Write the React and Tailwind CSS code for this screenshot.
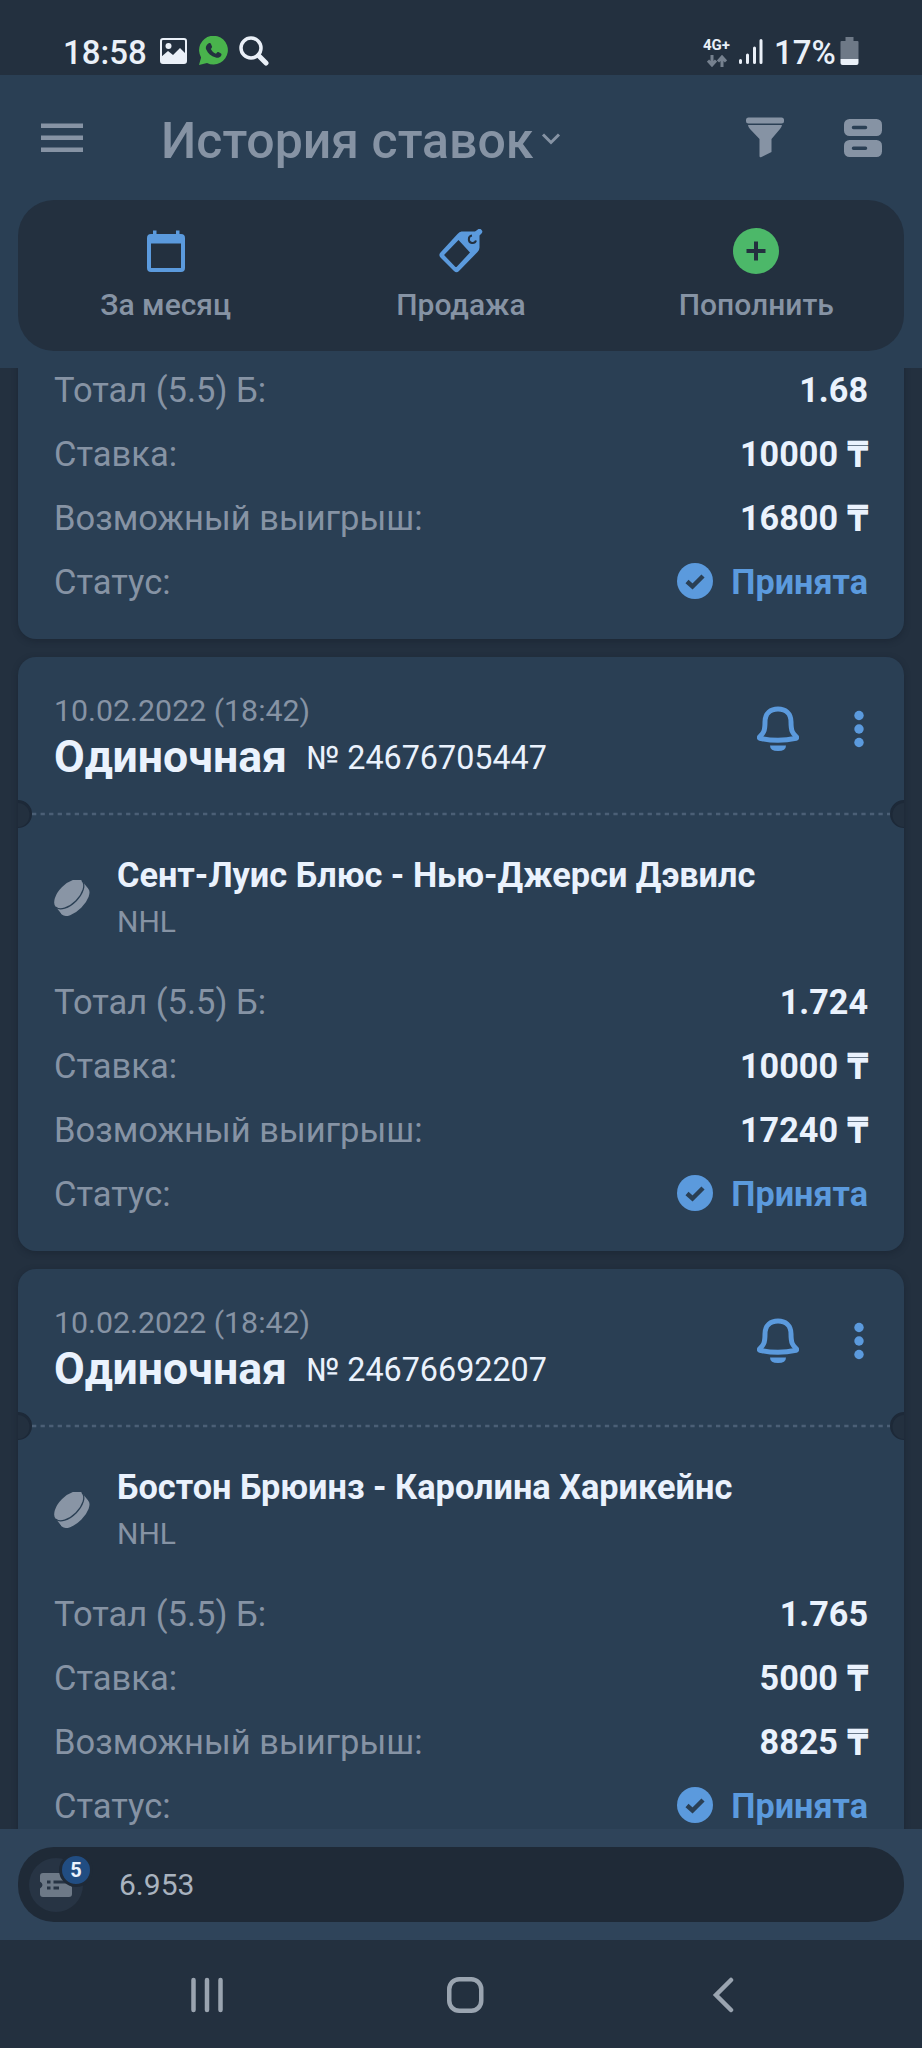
import { Fragment } from "react"

const bets = [
  {
    id: 1,
    rows: [["Тотал (5.5) Б:", "1.68"], ["Ставка:", "10000", "₸"], ["Возможный выигрыш:", "16800", "₸"]],
  },
  {
    id: 2,
    date: "10.02.2022 (18:42)",
    number: "№ 24676705447",
    teams: "Сент-Луис Блюс - Нью-Джерси Дэвилс",
    rows: [["Тотал (5.5) Б:", "1.724"], ["Ставка:", "10000", "₸"], ["Возможный выигрыш:", "17240", "₸"]],
  },
  {
    id: 3,
    date: "10.02.2022 (18:42)",
    number: "№ 24676692207",
    teams: "Бостон Брюинз - Каролина Харикейнс",
    rows: [["Тотал (5.5) Б:", "1.765"], ["Ставка:", "5000", "₸"], ["Возможный выигрыш:", "8825", "₸"]],
  },
]

export default function App(){
  return(
    <div className="flex h-[2048px] w-[922px] flex-col overflow-hidden bg-[#23303f] font-['Roboto',sans-serif] leading-none whitespace-nowrap text-[#8693a4]">
      <StatusBar />
      <header className="h-[293px] shrink-0 bg-[#2a3f54]">
        <div className="flex h-[125px] items-center pr-10 pl-[41px]">
          <MenuIcon />
          <h1 className="mt-[7px] ml-[78px] text-[50px] font-medium">История ставок</h1>
          <svg className="mt-0.5 ml-2" width="20" height="14" viewBox="0 0 20 14" fill="none" stroke="currentColor" strokeWidth="3">
            <path d="M2 2.5 10 10.5 18 2.5" />
          </svg>
          <div className="ml-auto flex items-center gap-[60px]">
            <FilterIcon />
            <ViewIcon />
          </div>
        </div>
        <nav className="mx-[18px] grid h-[151px] grid-cols-3 rounded-[36px] bg-[#23303f]">
          <Tab label="За месяц"><CalendarIcon /></Tab>
          <Tab label="Продажа"><TagIcon /></Tab>
          <Tab label="Пополнить"><PlusIcon /></Tab>
        </nav>
      </header>

      <main className="flex min-h-0 flex-1 flex-col gap-[18px] overflow-hidden px-[18px]">
        {bets.map((bet) => (
          <BetCard key={bet.id} bet={bet} />
        ))}
      </main>

      <Coupon />
      <SystemNav />
    </div>
  )
}

function StatusBar(){
  return(
    <div className="flex h-[75px] shrink-0 items-start justify-between pt-9 pr-[63px] pl-[63px] text-[#eaf0f8]">
      <div className="flex items-start">
        <span className="w-[83px] text-[33px] font-medium">18:58</span>
        <svg className="mt-0.5 ml-3.5" width="27" height="26" viewBox="0 0 27 26">
          <rect x="1" y="1" width="25" height="24" rx="2" fill="none" stroke="currentColor" strokeWidth="2" />
          <circle cx="8.5" cy="8" r="3" fill="currentColor" />
          <path d="M1 19 8 13 13 17 20 10 26 16V25H1Z" fill="currentColor" />
        </svg>
        <svg className="ml-3" width="29" height="29" viewBox="0 0 29 29">
          <path d="M0 29 2.1 21.5A14.4 14.4 0 1 1 8 27Z" fill="#49b34c" />
          <path d="M9.4 7.5c1.3-1 2.2-.4 2.7.8l.9 2.1c.3.7-.2 1.3-1.2 2.5 1.2 2.3 2.9 3.9 5.2 4.8 1.2-1.5 1.6-2 2.4-1.6l2.6 1.3c.8.4.6 1.5 0 2.6-1 1.5-3.2 2.2-5.2 1.6-5-1.5-7.8-4.2-9.6-8.1-1-2.3.6-5 2.2-6Z" fill="#23303f" />
        </svg>
        <svg className="ml-[11px]" width="30" height="30" viewBox="0 0 30 30" fill="none" stroke="currentColor">
          <circle cx="12" cy="12" r="10" strokeWidth="3.5" />
          <path d="M19.5 19.5 27 27" strokeWidth="5" strokeLinecap="round" />
        </svg>
      </div>
      <div className="flex items-start">
        <div className="flex w-[27px] flex-col items-center pt-0.5">
          <span className="text-[15px] font-bold">4G+</span>
          <svg className="mt-0.5" width="20" height="12" viewBox="0 0 20 12" fill="none" stroke="#76818f" strokeWidth="3">
            <path d="M5 0V10M1 5.5 5 10 9 5.5M15 12V2M11 6.5 15 2 19 6.5" />
          </svg>
        </div>
        <svg className="mt-[3px] ml-[9px]" width="24" height="26" viewBox="0 0 24 26" stroke="currentColor" strokeWidth="3" strokeLinecap="round">
          <path d="M1.5 21.5V23.5M8.5 16V23.5M15.5 9V23.5M22 1.5V23.5" />
        </svg>
        <span className="ml-[11px] w-[62px] text-[33px] font-medium">17%</span>
        <svg className="mt-px ml-1" width="19" height="28" viewBox="0 0 19 28">
          <path d="M5.5 0H13.5V4H17.5Q18.5 4 18.5 5V22H.5V5Q.5 4 1.5 4H5.5Z" fill="#6e7987" />
          <path d="M.5 22H18.5V26Q18.5 28 16.5 28H2.5Q.5 28 .5 26Z" fill="currentColor" />
        </svg>
      </div>
    </div>
  )
}

function Tab({ label, children }){
  return(
    <div className="flex flex-col items-center">
      <div className="mt-[26px] flex h-[50px] items-center">{children}</div>
      <p className="mt-3.5 text-[30px] font-medium">{label}</p>
    </div>
  )
}

function BetCard({ bet }){
  const { date, number, teams, rows } = bet
  return(
    <section
      className={`shrink-0 bg-[#2a3f54] px-9 pb-[25px] shadow-[0_2px_6px_rgba(16,26,38,0.35)] ${date ? "rounded-[18px]" : "-mt-2.5 rounded-b-[18px]"}`}
    >
      {date && (
        <Fragment>
          <div className="flex h-[156px] items-start justify-between">
            <div className="pt-[39px]">
              <p className="text-[30.3px]">{date}</p>
              <div className="mt-[9px] flex items-center gap-[19px]">
                <h2 className="text-[44.6px] font-bold text-[#eaf2fd]">Одиночная</h2>
                <span className="pt-0.5 text-[32.3px] text-[#eaf2fd]">{number}</span>
              </div>
            </div>
            <div className="flex items-center gap-[55px] pt-[49px] pr-1 text-[#5b9add]">
              <BellIcon />
              <svg width="10" height="38" viewBox="0 0 10 38" fill="currentColor">
                <circle cx="5" cy="5.5" r="4.7" />
                <circle cx="5" cy="19" r="4.7" />
                <circle cx="5" cy="32.5" r="4.7" />
              </svg>
            </div>
          </div>
          <Perforation />
          <div className="flex h-[155px] items-start">
            <PuckIcon />
            <div className="ml-[26px] pt-[43px]">
              <p className="text-[34.3px] font-bold text-[#eaf2fd]">{teams}</p>
              <p className="mt-[15px] text-[30px]">NHL</p>
            </div>
          </div>
        </Fragment>
      )}
      {rows.map(([name, value, currency]) => (
        <div key={name} className="flex h-16 items-center justify-between text-[34.5px]">
          <span>{name}</span>
          <span className="text-[34.2px] font-bold text-[#eaf2fd]">
            {value}
            {currency && <span className="ml-[11px] inline-block origin-right scale-x-105 [-webkit-text-stroke:0.8px]">{currency}</span>}
          </span>
        </div>
      ))}
      <div className="flex h-16 items-center text-[34.5px]">
        <span>Статус:</span>
        <CheckIcon />
        <span className="ml-[18px] text-[34.2px] font-bold text-[#5b9add]">Принята</span>
      </div>
    </section>
  )
}

// dashed tear line with a half-circle notch on both edges
function Perforation(){
  return(
    <div className="-mx-9 h-0.5">
      <svg className="relative -top-3.5 block" width="886" height="30" viewBox="0 0 886 30">
        <path d="M14 15H874" stroke="#4b5f76" strokeWidth="2.5" strokeDasharray="4.3 4.25" />
        <path d="M0 1A14 14 0 0 1 0 29ZM886 1A14 14 0 0 0 886 29Z" fill="#1d2938" />
        <path d="M0 4A11 11.5 0 0 1 0 28ZM886 4A11 11.5 0 0 0 886 28Z" fill="#23303f" />
      </svg>
    </div>
  )
}

function Coupon(){
  return(
    <div className="h-[111px] shrink-0 bg-[#2f445a] px-[18px] pt-[18px]">
      <div className="flex h-[75px] items-center rounded-[36px] bg-[#1f2a37] pl-[11px]">
        <div className="relative flex size-[54px] items-center justify-center rounded-full bg-[#273444]">
          <svg width="32" height="24" viewBox="0 0 32 24">
            <path d="M3 0H29Q32 0 32 3V10Q29 11.5 32 14V21Q32 24 29 24H3Q0 24 0 21V15.5Q5 12 0 8.5V3Q0 0 3 0Z" fill="#6d7987" />
            <path d="M7 9H10.5M13.5 9H26M7 15H10.5M13.5 15H19" stroke="#273444" strokeWidth="3" />
          </svg>
          <span className="absolute -top-[5px] left-[30px] flex size-[34px] items-center justify-center rounded-full border-[3.5px] border-[#1f2a37] bg-[#214d82] text-[20px] font-bold text-[#eaf2fd]">5</span>
        </div>
        <span className="ml-9 pt-px text-[30px] text-[#a9b3bf]">6.953</span>
      </div>
    </div>
  )
}

function SystemNav(){
  return(
    <div className="flex h-[108px] shrink-0 items-center pt-px pl-[190px] text-[#9aa4b0]">
      <svg width="34" height="36" viewBox="0 0 34 36" stroke="currentColor" strokeWidth="4.5" strokeLinecap="round">
        <path d="M3.5 3V33M17 3V33M30.5 3V33" />
      </svg>
      <svg className="ml-[222px]" width="38" height="38" viewBox="0 0 38 38" fill="none" stroke="currentColor" strokeWidth="4.5">
        <rect x="3.25" y="3.25" width="32" height="31.5" rx="10" />
      </svg>
      <svg className="ml-[228px]" width="22" height="36" viewBox="0 0 22 36" fill="none" stroke="currentColor" strokeWidth="4.5" strokeLinecap="round">
        <path d="M19 3 4 18 19 33" />
      </svg>
    </div>
  )
}

function MenuIcon(){
  return(
    <svg width="42" height="30" viewBox="0 0 42 30" fill="currentColor">
      <path d="M0 .5H42V5H0ZM0 12.5H42V17H0ZM0 24.5H42V29H0Z" />
    </svg>
  )
}

function FilterIcon(){
  return(
    <svg width="38" height="41" viewBox="0 0 38 41" fill="currentColor">
      <rect width="38" height="6" y=".5" rx="2.5" />
      <path d="M2 8H36Q35.5 10.5 34 12L25.5 22V35L15.5 40Q13.5 41 13.5 39V22L4 12Q2.3 10.5 2 8Z" />
    </svg>
  )
}

function ViewIcon(){
  return(
    <svg width="38" height="38" viewBox="0 0 38 38">
      <rect width="38" height="17" rx="5.5" fill="currentColor" />
      <rect y="21" width="38" height="17" rx="5.5" fill="currentColor" />
      <path d="M9.5 8.5H21.5M9.5 29.3H21.5" stroke="#2a3f54" strokeWidth="3.5" strokeLinecap="round" />
    </svg>
  )
}

function CalendarIcon(){
  return(
    <svg width="38" height="42" viewBox="0 0 38 42" fill="#5b9add">
      <path fillRule="evenodd" d="M6 .5H9.5V4H29V.5H32.5V4H34Q38 4 38 8V38Q38 42 34 42H4Q0 42 0 38V8Q0 4 4 4H6ZM4 13.5V38H34V13.5Z" />
    </svg>
  )
}

function TagIcon(){
  return(
    <svg width="44" height="44" viewBox="0 0 44 44">
      <path fillRule="evenodd" fill="#5b9add" d="M22.5 2.5H36L38.5.8A2.6 2.6 0 0 1 42.5 4.5L40.5 6.5V18.5Q40.5 21 38.5 23L20 42Q17.5 44.5 15 42L1.5 28.5Q-.8 26 1.5 23.5L18.5 5Q20.5 2.5 22.5 2.5ZM19.5 11 5.5 25.5Q5 26 5.5 26.5L16 37.5Q17 38.5 18 37.5L31 23.5Z" />
      <path d="M33 6.6A3.7 3.7 0 1 0 37 11.5" fill="none" stroke="#23303f" strokeWidth="2" />
    </svg>
  )
}

function PlusIcon(){
  return(
    <svg width="46" height="46" viewBox="0 0 46 46">
      <circle cx="23" cy="23" r="23" fill="#4cb869" />
      <path d="M23 13.5V32.5M13.5 23H32.5" stroke="#23303f" strokeWidth="4" />
    </svg>
  )
}

function BellIcon(){
  return(
    <svg width="42" height="46" viewBox="0 0 42 46" fill="none" stroke="currentColor" strokeWidth="5" strokeLinejoin="round">
      <path d="M8 16C8 7 14 3 21 3S34 7 34 16C34 26 36 27.5 39.5 31Q40 32 39 32.3Q30 34.3 21 34.3T3 32.3Q2 32 2.5 31C6 27.5 8 26 8 16Z" />
      <path d="M13 39.5H29Q29 45 21 45T13 39.5Z" fill="currentColor" stroke="none" />
    </svg>
  )
}

function PuckIcon(){
  return(
    <svg className="mt-[65px]" width="37" height="37" viewBox="0 0 37 37" fill="#8995a5">
      <ellipse cx="21" cy="21.5" rx="18.5" ry="8.8" transform="rotate(-45 21 21.5)" />
      <path d="M1.9 27.1 28.1.9 34.1 8.4 8 34.6Z" />
      <ellipse cx="15" cy="14" rx="18.5" ry="9.8" transform="rotate(-45 15 14)" />
      <path d="M1.9 27.1A18.5 9.8 -45 0 0 28.1.9" fill="none" stroke="#2a3f54" strokeWidth="1.3" />
    </svg>
  )
}

function CheckIcon(){
  return(
    <svg className="-mt-[3px] ml-auto" width="36" height="36" viewBox="0 0 36 36">
      <circle cx="18" cy="18" r="18" fill="#5b9add" />
      <path d="M10 18.5 15.5 23.5 26 13" fill="none" stroke="#2a3f54" strokeWidth="4.5" />
    </svg>
  )
}
